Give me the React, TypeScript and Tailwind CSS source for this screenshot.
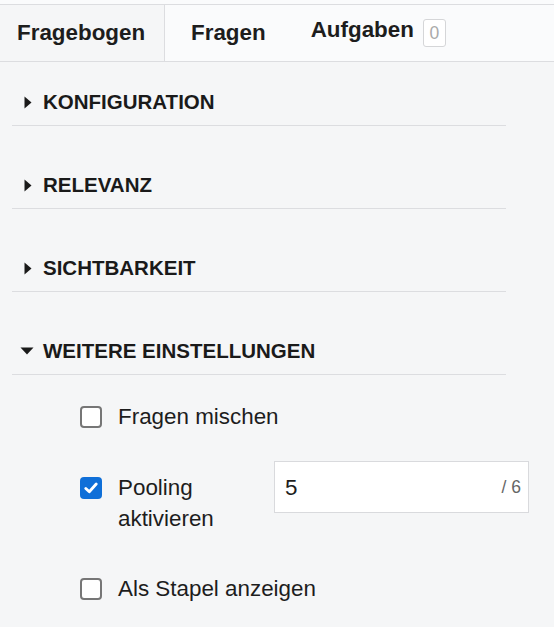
import React from 'react';

const font = { fontFamily: '"Liberation Sans", Arial, sans-serif' };

function Caret({ open }: { open: boolean }) {
  if (open) {
    return (
      <svg width="14" height="8" viewBox="0 0 14 8" className="shrink-0">
        <path d="M0.5 0.5 L13.5 0.5 L7 7.5 Z" fill="#1a1a1a" />
      </svg>
    );
  }
  return (
    <svg width="8" height="13" viewBox="0 0 8 13" className="shrink-0">
      <path d="M0.5 0.5 L7.5 6.5 L0.5 12.5 Z" fill="#1a1a1a" />
    </svg>
  );
}

function Section({ title, open, first }: { title: string; open?: boolean; first?: boolean }) {
  return (
    <div className={`${first ? '' : 'mt-[19px]'} border-b border-[#dcdde0] pt-[28px] pb-[11px]`}>
      <div className={`flex items-center h-[24px] ${open ? 'pl-[8px] gap-[9px]' : 'pl-[12px] gap-[11px]'}`}>
        <Caret open={!!open} />
        <span className="text-[20.5px] leading-[24px] font-bold uppercase text-[#1a1a1a]">{title}</span>
      </div>
    </div>
  );
}

function Checkbox({ checked }: { checked?: boolean }) {
  return (
    <div className="h-[31px] flex items-center shrink-0">
      {checked ? (
        <div className="w-[22px] h-[22px] rounded-[4px] bg-[#0f6fd8] flex items-center justify-center">
          <svg width="14" height="12" viewBox="0 0 14 12">
            <path d="M1.8 6.4 L5.3 9.8 L12.2 2" fill="none" stroke="white" strokeWidth="2.8" strokeLinecap="round" strokeLinejoin="round" />
          </svg>
        </div>
      ) : (
        <div className="w-[22px] h-[22px] rounded-[4px] border-2 border-[#767676] bg-white" />
      )}
    </div>
  );
}

export default function App() {
  return (
    <div className="w-[554px] h-[627px] bg-[#f5f6f7] text-[#1d1d1d] overflow-hidden" style={font}>
      {/* Tabs */}
      <div className="pt-[4px] bg-[#fafbfc]">
        <div className="flex h-[58px] border-t border-b border-[#dcdde0] bg-[#fafbfc]">
          <div className="w-[165px] bg-[#f5f6f7] border-r border-[#dcdde0] flex items-center pl-[17px]">
            <span className="text-[22.4px] font-bold text-[#1d1d1d]">Fragebogen</span>
          </div>
          <div className="flex items-center pl-[26px]">
            <span className="text-[22.4px] font-bold text-[#1d1d1d]">Fragen</span>
          </div>
          <div className="flex items-center pl-[45px] gap-[9px]">
            <span className="text-[22.4px] font-bold text-[#1d1d1d] mb-[7px]">Aufgaben</span>
            <span className="w-[23px] h-[28px] border border-[#d5d6d8] rounded-[3px] bg-white flex items-center justify-center text-[17.5px] text-[#aaaaaa]">
              0
            </span>
          </div>
        </div>
      </div>

      {/* Sections */}
      <div className="pl-[12px] pr-[48px]">
        <Section title="Konfiguration" first />
        <Section title="Relevanz" />
        <Section title="Sichtbarkeit" />
        <Section title="Weitere Einstellungen" open />
      </div>

      {/* Options */}
      <div className="pl-[80px] pt-[26px] text-[22.4px] leading-[31px]">
        <div className="flex items-start gap-[16px]">
          <Checkbox />
          <span>Fragen mischen</span>
        </div>
        <div className="flex items-start mt-[29px]">
          <div className="flex items-start gap-[16px] mt-[11px] w-[194px]">
            <Checkbox checked />
            <span className="w-[140px]">Pooling aktivieren</span>
          </div>
          <div className="w-[255px] h-[52px] border border-[#d9dadd] bg-white flex items-center pl-[10px] pr-[7px]">
            <span className="flex-1 text-[22.4px]">5</span>
            <span className="text-[17.5px] text-[#666666]">/ 6</span>
          </div>
        </div>
        <div className="flex items-start gap-[16px] mt-[39px]">
          <Checkbox />
          <span>Als Stapel anzeigen</span>
        </div>
      </div>
    </div>
  );
}
